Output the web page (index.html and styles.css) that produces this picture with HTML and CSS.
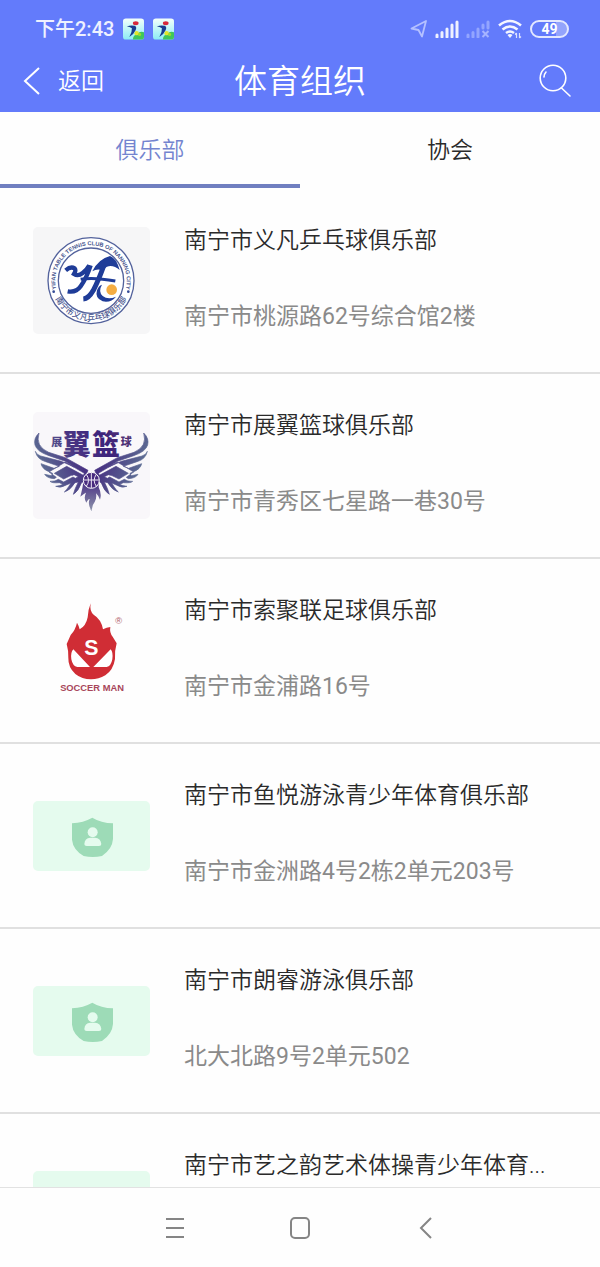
FILE: index.html
```html
<!DOCTYPE html>
<html lang="zh-CN">
<head>
    <meta charset="UTF-8">
    <meta name="viewport" content="width=device-width, initial-scale=1.0">
    <title>体育组织</title>
    <link rel="stylesheet" href="styles.css">
</head>
<body>

    <!-- Shared icons -->
    <svg class="symbols" aria-hidden="true">
        <defs>
            <linearGradient id="app-bg" x1="0" y1="0" x2="0" y2="1">
                <stop offset="0" stop-color="#f4fffb"/>
                <stop offset="1" stop-color="#8cecf4"/>
            </linearGradient>
        </defs>
        <symbol id="app-icon" viewBox="0 0 66 66">
            <rect width="66" height="66" rx="9" fill="url(#app-bg)"/>
            <path d="M31 66Q33 49 43 52Q52 37 66 43V58Q66 66 57 66Z" fill="#3fc65b"/>
            <circle cx="43" cy="46" r="7" fill="#e5e32c"/>
            <circle cx="52" cy="50" r="5" fill="#9bdd2e"/>
            <path d="M12 25Q24 20 37 23Q45 27 39 38Q33 52 20 58Q29 43 28 31Q21 25 12 25Z" fill="#183c91"/>
            <ellipse cx="40" cy="15" rx="9" ry="6" fill="#d8293b"/>
        </symbol>
        <symbol id="shield" viewBox="9 16 351 210">
            <path d="M187 66Q213 82 249 83V130Q247 160 216 181Q188 187 161 181Q129 162 126 132V83Q160 81 187 66Z" fill="#9ddbb7"/>
            <circle cx="188" cy="110" r="15" fill="#e5fbee"/>
            <path d="M163 145Q164 127 181 126H195Q212 127 214 145Q214 151 207 151H170Q163 151 163 145Z" fill="#e5fbee"/>
        </symbol>
    </svg>

    <header class="header">
        <div class="status-bar">
            <span class="time">下午2:43</span>
            <svg class="app" aria-hidden="true"><use href="#app-icon"/></svg>
            <svg class="app" aria-hidden="true"><use href="#app-icon"/></svg>
            <div class="status-icons">
                <svg width="18" height="20" viewBox="0 0 18 20" aria-hidden="true">
                    <path d="M1.5 9.5L16 2L12 17.500L8.500 11Z" fill="none" stroke="#b5c1ff" stroke-width="1.800" stroke-linejoin="round"/>
                </svg>
                <svg width="24" height="18" viewBox="0 0 24 18" aria-hidden="true">
                    <path d="M2 17V15M7 17V12.500M12 17V9M17 17V5M22 17V2" stroke="#eef1ff" stroke-width="3" stroke-linecap="round"/>
                </svg>
                <svg width="24" height="18" viewBox="0 0 24 18" aria-hidden="true">
                    <path d="M2 17V15M7 17V12.500M12 17V9M17 8V5M22 8V2" stroke="#93a5ff" stroke-width="3" stroke-linecap="round"/>
                    <path d="M16.500 11L22.500 17M22.500 11L16.500 17" stroke="#a6b4ff" stroke-width="2"/>
                </svg>
                <svg width="26" height="20" viewBox="0 0 26 20" aria-hidden="true">
                    <path d="M2 6.500Q13 -2.500 24 6.500M5.500 10.500Q13 4.500 20.500 10.500M9 14Q13 11 17 14" fill="none" stroke="#f4f6ff" stroke-width="2.600"/>
                    <path d="M10.500 16Q13 14 15.500 16L13 19Z" fill="#f4f6ff"/>
                    <path d="M19.500 19V14M18 15.500L19.500 14M22.500 14V19M24 17.500L22.500 19" fill="none" stroke="#dbe1ff" stroke-width="1.200"/>
                </svg>
                <span class="battery">49</span>
            </div>
        </div>
        <nav class="title-bar">
            <a class="back" href="#">
                <svg width="18" height="30" viewBox="0 0 18 30" aria-hidden="true">
                    <path d="M16 1L2 14L16 27" fill="none" stroke="currentColor" stroke-width="2"/>
                </svg>
                返回
            </a>
            <h1>体育组织</h1>
            <button class="search" type="button" aria-label="搜索">
                <svg width="38" height="36" viewBox="0 0 38 36" aria-hidden="true">
                    <g fill="none" stroke="currentColor" stroke-width="1.600" stroke-linecap="round">
                        <circle cx="14" cy="14" r="12.800"/>
                        <path d="M22.500 24L31 32M5 13Q5.200 10 7 8"/>
                    </g>
                </svg>
            </button>
        </nav>
    </header>

    <nav class="tabs">
        <a class="tab active" href="#">俱乐部</a>
        <a class="tab" href="#">协会</a>
    </nav>

    <main class="club-list">
        <a class="club" href="#">
            <svg class="logo tinted" viewBox="9 21 351 321" aria-hidden="true">
                <defs>
                    <path id="ring-top" d="M88 232A107 107 0 1 1 278 232"/>
                    <path id="ring-bottom" d="M66 205A119 119 0 0 0 300 205"/>
                </defs>
                <circle cx="183" cy="182" r="129" fill="#fff" stroke="#53629c" stroke-width="4"/>
                <circle cx="183" cy="182" r="98" fill="#fff" stroke="#53629c" stroke-width="4"/>
                <text class="ring-text"><textPath href="#ring-top" startOffset="50%" text-anchor="middle">YIFAN TABLE TENNIS CLUB OF NANNING CITY</textPath></text>
                <text class="ring-text zh"><textPath href="#ring-bottom" startOffset="50%" text-anchor="middle">南宁市义凡乒乓球俱乐部</textPath></text>
                <circle cx="71" cy="215" r="4" fill="#344b96"/>
                <circle cx="295" cy="215" r="4" fill="#344b96"/>
                <g transform="translate(90 90)">
                    <g fill="none" stroke="#1f3c98">
                        <path d="M17 61Q32 48 44 55Q49 61 42 72Q54 80 68 69Q80 60 88 46M92 46Q80 83 62 109Q48 129 23 124" stroke-width="13"/>
                        <path d="M131 48Q116 90 100 121Q86 146 70 147" stroke-width="15"/>
                        <path d="M62 88Q100 81 166 93" stroke-width="9"/>
                    </g>
                    <path d="M97 64Q115 27 150 18Q169 24 179 60Q160 44 141 50L126 60Q110 55 97 64Z" fill="#1f3c98"/>
                    <path d="M126 104Q114 124 128 138Q144 151 168 140Q153 159 128 154Q104 145 111 121Q115 108 126 104Z" fill="#1f3c98"/>
                    <circle cx="155" cy="119" r="16" fill="#f5ad42"/>
                </g>
            </svg>
            <div class="info">
                <h2>南宁市义凡乒乓球俱乐部</h2>
                <p>南宁市桃源路62号综合馆2楼</p>
            </div>
        </a>

        <a class="club" href="#">
            <svg class="logo wings" viewBox="9 21 351 321" aria-hidden="true">
                <defs>
                    <linearGradient id="wing-ink" gradientUnits="userSpaceOnUse" x1="40" y1="220" x2="320" y2="100">
                        <stop offset="0" stop-color="#5d6f94"/>
                        <stop offset="0.400" stop-color="#493383"/>
                        <stop offset="0.700" stop-color="#3d237c"/>
                        <stop offset="1" stop-color="#55356f"/>
                    </linearGradient>
                    <linearGradient id="tail-ink" x1="0" y1="0" x2="0" y2="1">
                        <stop offset="0" stop-color="#472c83"/>
                        <stop offset="1" stop-color="#8f96ac"/>
                    </linearGradient>
                    <g id="wing">
                        <path d="M27 84Q10 100 15 120Q21 140 57 152L106 169L132 186L94 169L32 153Q18 148 16 139Q21 163 47 170L88 184L72 190L33 176Q36 192 59 201L68 205L64 212L44 208Q51 220 73 221L79 217L57 201L106 171L163 205L160 211L110 184L73 205L101 222L130 208L145 215L136 220L129 216L101 231L85 223Q76 230 60 229Q66 235 88 233L99 238Q91 243 77 244Q91 251 109 240L123 234Q108 258 103 261Q121 256 135 233L145 231Q134 252 130 268Q145 260 154 234L171 222L170 205L174 196L106 158L56 142Q15 124 27 84Z"/>
                        <path d="M104 193L135 207L128 211L101 201L88 207L82 204Z"/>
                    </g>
                </defs>
                <g fill="url(#wing-ink)" stroke="url(#wing-ink)" stroke-width="2">
                    <use href="#wing"/>
                    <use href="#wing" transform="translate(368 0) scale(-1 1)"/>
                </g>
                <g fill="url(#wing-ink)">
                    <text class="wing-text small" x="64" y="124">展</text>
                    <text class="wing-text" x="98" y="149">翼</text>
                    <text class="wing-text" x="186" y="149">篮</text>
                    <text class="wing-text small" x="272" y="124">球</text>
                </g>
                <path d="M161 226Q158 250 151 275Q166 263 168 263Q160 280 169 293Q177 278 179 283Q172 298 185 319Q185 301 194 291Q201 279 198 265Q208 275 210 284Q216 267 206 247L207 226Z" fill="url(#tail-ink)"/>
                <circle cx="184" cy="226" r="24" fill="#492b7e" stroke="#fff" stroke-width="3"/>
                <path d="M184 203V249M161 225H207M169 208Q182 226 169 244M199 208Q186 226 199 244" fill="none" stroke="#eee8f5" stroke-width="3"/>
            </svg>
            <div class="info">
                <h2>南宁市展翼篮球俱乐部</h2>
                <p>南宁市青秀区七星路一巷30号</p>
            </div>
        </a>

        <a class="club" href="#">
            <svg class="logo" viewBox="9 21 351 321" aria-hidden="true">
                <path d="M182 40Q178 64 191 74Q214 88 219 118Q230 112 241 111Q238 128 248 140L260 160Q253 185 255 207Q250 240 226 256Q206 268 183 268Q156 268 136 252Q114 232 115 204Q116 183 110 162L122 135Q136 120 141 98Q147 108 149 118Q168 108 173 82Q174 60 182 40Z" fill="#d02d35"/>
                <path d="M130 178L180 231H142Q128 229 124 208Q121 187 130 178ZM242 178L190 231H230Q243 229 247 208Q250 187 242 178Z" fill="#fff"/>
                <text class="soccer-s" x="184" y="195">S</text>
                <text class="soccer-name" x="186" y="303">SOCCER MAN</text>
                <text class="soccer-mark" x="266" y="103">®</text>
            </svg>
            <div class="info">
                <h2>南宁市索聚联足球俱乐部</h2>
                <p>南宁市金浦路16号</p>
            </div>
        </a>

        <a class="club" href="#">
            <svg class="logo default" aria-hidden="true"><use href="#shield"/></svg>
            <div class="info">
                <h2>南宁市鱼悦游泳青少年体育俱乐部</h2>
                <p>南宁市金洲路4号2栋2单元203号</p>
            </div>
        </a>

        <a class="club" href="#">
            <svg class="logo default" aria-hidden="true"><use href="#shield"/></svg>
            <div class="info">
                <h2>南宁市朗睿游泳俱乐部</h2>
                <p>北大北路9号2单元502</p>
            </div>
        </a>

        <a class="club" href="#">
            <svg class="logo default" aria-hidden="true"><use href="#shield"/></svg>
            <div class="info">
                <h2>南宁市艺之韵艺术体操青少年体育...</h2>
            </div>
        </a>
    </main>

    <footer class="system-nav">
        <button type="button" aria-label="菜单">
            <svg width="24" height="24" viewBox="0 0 24 24" aria-hidden="true">
                <path d="M3 3H21M3 12H21M3 21H21"/>
            </svg>
        </button>
        <button type="button" aria-label="主页">
            <svg width="24" height="24" viewBox="0 0 24 24" aria-hidden="true">
                <rect x="3" y="2" width="18" height="20" rx="4"/>
            </svg>
        </button>
        <button type="button" aria-label="返回">
            <svg width="24" height="24" viewBox="0 0 24 24" aria-hidden="true">
                <path d="M18 2L8 12L18 22"/>
            </svg>
        </button>
    </footer>

</body>
</html>
```
FILE: styles.css
```css
/* Basic Reset */
* {
    margin: 0;
    padding: 0;
    box-sizing: border-box;
}
body {
    display: flex;
    flex-direction: column;
    height: 100vh;
    font-family: Roboto, "Noto Sans CJK SC", sans-serif;
    font-size: 23px;
    font-weight: 350;
    background-color: #fefefe;
    color: #2a2a2a;
}
a {
    color: inherit;
    text-decoration: none;
}
button {
    border: none;
    background: none;
    cursor: pointer;
}
svg {
    display: block;
    flex-shrink: 0;
}
.symbols {
    position: absolute;
    width: 0;
    height: 0;
}

/* Header */
.header {
    flex-shrink: 0;
    padding-bottom: 6px;
    background-color: #637bfb;
    color: white;
}
.status-bar {
    display: flex;
    align-items: center;
    gap: 9px;
    height: 58px;
    padding: 0 31px 0 35px;
}
.time {
    font-size: 20px;
    font-weight: 500;
    line-height: 24px;
    color: #eef1ff;
}
.app {
    width: 21px;
    height: 22px;
}
.status-icons {
    display: flex;
    align-items: center;
    gap: 7px;
    margin-left: auto;
}
.battery {
    width: 39px;
    height: 18px;
    border: 2px solid #e3e8ff;
    border-radius: 9px;
    background: linear-gradient(to right, transparent 70%, #93a4fc 70%);
    font-size: 14px;
    font-weight: 700;
    line-height: 14px;
    text-align: center;
}
.title-bar {
    display: grid;
    grid-template-columns: 1fr auto 1fr;
    align-items: center;
    height: 48px;
    padding: 0 23px;
}
.title-bar h1 {
    font-size: 33px;
    font-weight: 350;
    line-height: 48px;
}
.back {
    display: flex;
    align-items: center;
    gap: 17px;
    line-height: 32px;
}
.search {
    justify-self: end;
    color: white;
}

/* Tabs */
.tabs {
    display: flex;
    flex-shrink: 0;
}
.tab {
    flex: 1;
    height: 76px;
    border-bottom: 4px solid transparent;
    line-height: 78px;
    text-align: center;
}
.tab.active {
    border-color: #707fc0;
    color: #7384cf;
}

/* Club list */
.club-list {
    flex: 1;
    min-height: 0;
    padding-top: 1px;
    overflow: hidden;
}
.club {
    display: flex;
    gap: 34px;
    height: 185px;
    padding: 0 33px;
    border-bottom: 2px solid #e0e0e0;
}
.logo {
    align-self: center;
    width: 117px;
    height: 107px;
    border-radius: 5px;
}
.logo.tinted {
    background-color: #f6f6f7;
}
.logo.wings {
    background-color: #f9f7fa;
}
.logo.default {
    height: 70px;
    background-color: #e5fbee;
}
.info {
    flex: 1;
    min-width: 0;
    padding-top: 36px;
    line-height: 32px;
}
.info h2 {
    margin-bottom: 44px;
    overflow: hidden;
    font-size: 23px;
    font-weight: 350;
    text-overflow: ellipsis;
    white-space: nowrap;
}
.info p {
    font-weight: 400;
    color: #8a8a8a;
}

/* Logo lettering */
.ring-text {
    fill: #4a5890;
    font-family: "Liberation Sans", sans-serif;
    font-size: 17px;
    font-weight: 700;
}
.ring-text.zh {
    font-family: "Noto Sans CJK SC", sans-serif;
    font-size: 24px;
    font-weight: 500;
}
.wing-text {
    font-family: "Noto Sans CJK SC", sans-serif;
    font-size: 84px;
    font-weight: 900;
}
.wing-text.small {
    font-size: 33px;
}
.soccer-s,
.soccer-name,
.soccer-mark {
    font-family: "Liberation Sans", sans-serif;
    text-anchor: middle;
}
.soccer-s {
    fill: white;
    font-size: 64px;
    font-weight: 700;
}
.soccer-name {
    fill: #a8465a;
    font-size: 28px;
    font-weight: 700;
}
.soccer-mark {
    fill: #b0626c;
    font-size: 28px;
}

/* System navigation */
.system-nav {
    display: flex;
    flex-shrink: 0;
    align-items: center;
    justify-content: center;
    gap: 101px;
    height: 80px;
    border-top: 1px solid #e2e2e2;
}
.system-nav svg {
    fill: none;
    stroke: #858585;
    stroke-width: 2;
}
```
